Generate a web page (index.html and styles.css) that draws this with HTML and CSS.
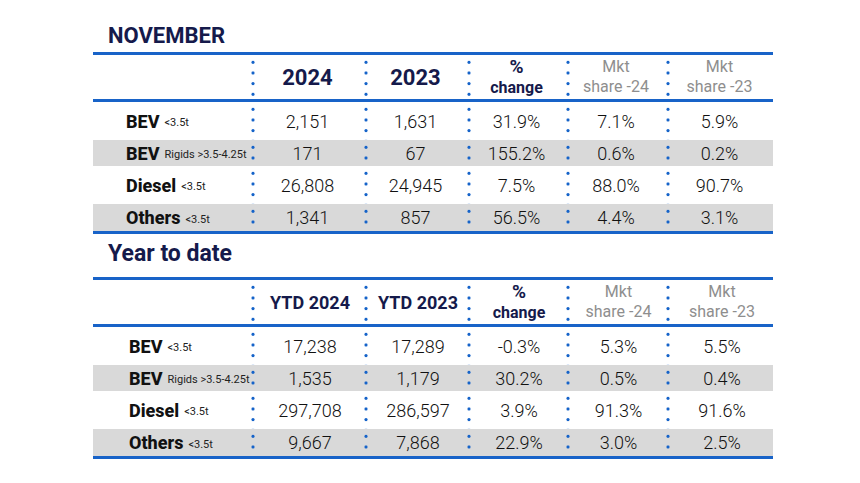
FILE: index.html
```html
<!DOCTYPE html>
<html>
<head>
<meta charset="utf-8">
<link rel="stylesheet" href="styles.css">
</head>
<body>
<div class="page">
  <h2 class="title title-1">NOVEMBER</h2>
  <div class="table t1">
    <div class="row head">
      <div class="cell label"></div>
      <div class="cell"><span class="year">2024</span></div>
      <div class="cell"><span class="year">2023</span></div>
      <div class="cell"><span class="chg"><span class="pct">%</span><br>change</span></div>
      <div class="cell"><span class="mkt">Mkt<br>share -24</span></div>
      <div class="cell"><span class="mkt">Mkt<br>share -23</span></div>
    </div>
    <div class="row tall">
      <div class="cell label"><b>BEV</b><small>&lt;3.5t</small></div>
      <div class="cell">2,151</div><div class="cell">1,631</div><div class="cell">31.9%</div><div class="cell">7.1%</div><div class="cell">5.9%</div>
    </div>
    <div class="row shade">
      <div class="cell label"><b>BEV</b><small>Rigids &gt;3.5-4.25t</small></div>
      <div class="cell">171</div><div class="cell">67</div><div class="cell">155.2%</div><div class="cell">0.6%</div><div class="cell">0.2%</div>
    </div>
    <div class="row tall">
      <div class="cell label"><b>Diesel</b><small>&lt;3.5t</small></div>
      <div class="cell">26,808</div><div class="cell">24,945</div><div class="cell">7.5%</div><div class="cell">88.0%</div><div class="cell">90.7%</div>
    </div>
    <div class="row shade">
      <div class="cell label"><b>Others</b><small>&lt;3.5t</small></div>
      <div class="cell">1,341</div><div class="cell">857</div><div class="cell">56.5%</div><div class="cell">4.4%</div><div class="cell">3.1%</div>
    </div>
  </div>

  <h2 class="title title-2">Year to date</h2>
  <div class="table t2">
    <div class="row head">
      <div class="cell label"></div>
      <div class="cell"><span class="year">YTD 2024</span></div>
      <div class="cell"><span class="year">YTD 2023</span></div>
      <div class="cell"><span class="chg"><span class="pct">%</span><br>change</span></div>
      <div class="cell"><span class="mkt">Mkt<br>share -24</span></div>
      <div class="cell"><span class="mkt">Mkt<br>share -23</span></div>
    </div>
    <div class="row tall">
      <div class="cell label"><b>BEV</b><small>&lt;3.5t</small></div>
      <div class="cell">17,238</div><div class="cell">17,289</div><div class="cell">-0.3%</div><div class="cell">5.3%</div><div class="cell">5.5%</div>
    </div>
    <div class="row shade">
      <div class="cell label"><b>BEV</b><small>Rigids &gt;3.5-4.25t</small></div>
      <div class="cell">1,535</div><div class="cell">1,179</div><div class="cell">30.2%</div><div class="cell">0.5%</div><div class="cell">0.4%</div>
    </div>
    <div class="row tall">
      <div class="cell label"><b>Diesel</b><small>&lt;3.5t</small></div>
      <div class="cell">297,708</div><div class="cell">286,597</div><div class="cell">3.9%</div><div class="cell">91.3%</div><div class="cell">91.6%</div>
    </div>
    <div class="row shade">
      <div class="cell label"><b>Others</b><small>&lt;3.5t</small></div>
      <div class="cell">9,667</div><div class="cell">7,868</div><div class="cell">22.9%</div><div class="cell">3.0%</div><div class="cell">2.5%</div>
    </div>
  </div>
</div>
</body>
</html>
```

FILE: styles.css
```css
* { box-sizing: border-box; }

html, body {
  margin: 0;
  padding: 0;
  background: #ffffff;
}

body {
  width: 860px;
  height: 483px;
  overflow: hidden;
  font-family: Roboto, "Liberation Sans", sans-serif;
}

.page {
  padding: 23px 0 0 93px;
}

.title {
  margin: 0;
  padding-left: 15px;
  height: 26px;
  line-height: 26px;
  color: #151a4b;
  font-weight: 700;
}

.title-1 {
  font-size: 22px;
  margin-bottom: 3px;
}

.title-2 {
  font-size: 23px;
  margin-top: 7px;
  margin-bottom: 10px;
}

.table {
  width: 680px;
  border-top: 3px solid #1863c8;
  border-bottom: 3px solid #1863c8;
}

.row {
  display: grid;
  grid-template-columns: 158px 113px 103px 99px 100px 107px;
}

.row.head {
  height: 47px;
  border-bottom: 3px solid #1863c8;
}

.row.tall { height: 38px; }

.row.shade {
  height: 26px;
  background: #d9d9d9;
}

.row.shade:last-child { height: 27px; }

.cell {
  display: flex;
  align-items: center;
  justify-content: center;
  font-size: 18px;
  font-weight: 300;
  color: #111111;
  background-image: radial-gradient(circle, #1563c9 1.3px, rgba(21, 99, 201, 0) 1.9px);
  background-size: 4px 10.67px;
  background-repeat: repeat-y;
  background-position: 0 2px;
  white-space: nowrap;
}

.t2 .cell { padding-left: 5px; }

.cell.label {
  justify-content: flex-start;
  padding-left: 33px;
  background-image: none;
}

.t2 .cell.label { padding-left: 36px; }

.label b {
  font-weight: 800;
  font-size: 18px;
  color: #111111;
}

.label small {
  font-size: 11px;
  font-weight: 400;
  color: #222222;
  margin-left: 5px;
  padding-top: 3px;
}

.year {
  font-weight: 700;
  font-size: 22px;
  color: #151a4b;
}

.t2 .year { font-size: 18px; }

.chg {
  font-weight: 700;
  font-size: 16px;
  line-height: 20px;
  text-align: center;
  color: #151a4b;
}

.pct { font-size: 19px; }

.mkt {
  font-size: 16px;
  font-weight: 400;
  line-height: 20px;
  text-align: center;
  color: #8e8e8e;
}
```
